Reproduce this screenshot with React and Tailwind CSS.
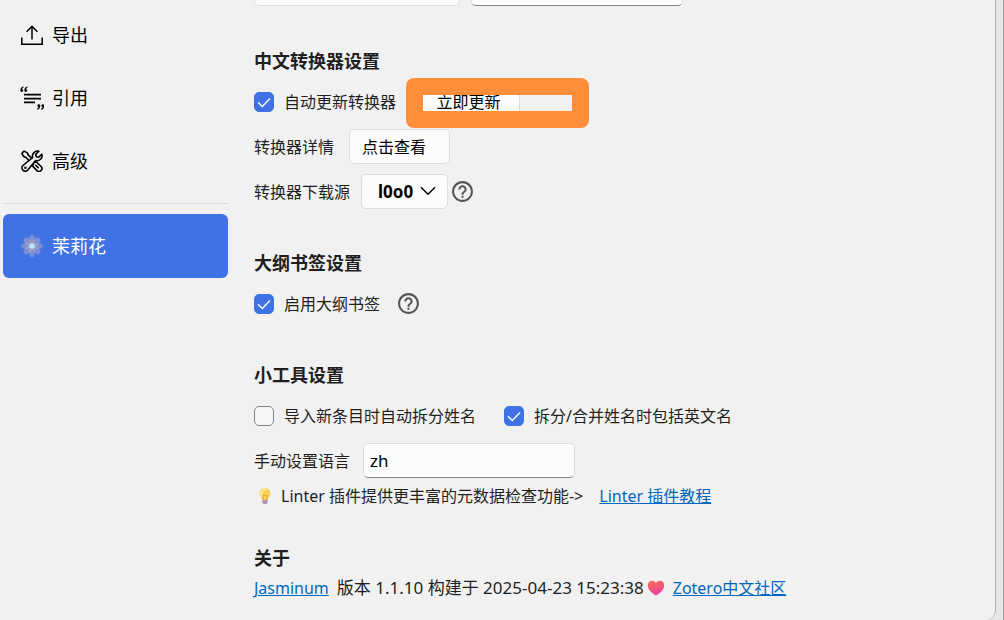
import { useState } from "react";
import { MdHelpOutline } from "react-icons/md";

// sidebar icons
const ExportIcon = () => (
	<svg viewBox="0 0 22 22" className="w-[22px] h-[22px]" fill="none" stroke="currentColor" strokeWidth="1.5">
		<path d="M0.8 13.5v6.7h20.4v-6.7" />
		<path d="M11 15.5V2.5M5.6 7.8L11 2.4l5.4 5.4" />
	</svg>
);

const CiteIcon = () => (
	<svg viewBox="0 0 24 24" className="w-6 h-6 -mx-px" fill="none" stroke="currentColor" strokeWidth="1.6">
		<path d="M4 8.6h17M4 12.6h17M4 16.400h11" />
		<g fill="currentColor" stroke="none">
			<path d="M3.4 0.4C1.4 1 0.3 2.4 0.3 4.300c0 1.100.6 1.700 1.500 1.700s1.500-.6 1.500-1.400c0-.8-.5-1.300-1.300-1.400.2-.8.7-1.4 1.600-1.800z" />
			<path d="M7.4 0.4C5.4 1 4.3 2.4 4.3 4.300c0 1.100.6 1.700 1.500 1.700s1.500-.6 1.500-1.400c0-.8-.5-1.300-1.300-1.400.2-.8.7-1.4 1.600-1.800z" />
			<path d="M17.2 23.800c2-.6 3.100-2 3.100-3.900 0-1.100-.6-1.700-1.500-1.700s-1.500.6-1.500 1.400c0 .8.5 1.300 1.300 1.400-.2.800-.7 1.400-1.600 1.800z" />
			<path d="M21.2 23.800c2-.6 3.100-2 3.100-3.900 0-1.100-.6-1.700-1.500-1.700s-1.500.6-1.500 1.400c0 .8.5 1.300 1.300 1.400-.2.800-.7 1.400-1.600 1.800z" />
		</g>
	</svg>
);

const ToolsIcon = () => (
	<svg
		viewBox="0 0 22 22"
		className="w-[22px] h-[22px]"
		fill="none"
		stroke="currentColor"
		strokeWidth="1.6"
		strokeLinejoin="round"
		strokeLinecap="round"
	>
		{/* wrench */}
		<path d="M17.9 1.2a5.200 5.200 0 0 0-6.300 6.400L1.900 15.500a3.300 3.300 0 1 0 4.700 4.700l8-9.600a5.200 5.200 0 0 0 6.300-6.400l-3.200 3-2.500-.5-.5-2.300z" />
		<circle cx="4.4" cy="17.7" r="0.5" />
		{/* screwdriver */}
		<path d="M7.7 10.2L5 7.5 2.3 6.2 0.9 3.3 3.1 1.1 6.1 2.6 7.4 5.2 10 7.7" />
		<path d="M13.6 12.5l1.300-1 5.200 5a2.900 2.900 0 0 1-4.100 4.100l-4.600-4.700 1-1.300" />
		<path d="M14.8 15.2l2.500 2.500" />
	</svg>
);

const PETALS = [0, 45, 90, 135, 180, 225, 270, 315];

const JasmineIcon = () => (
	<svg viewBox="0 0 22 22" className="w-[22px] h-[22px]">
		{PETALS.map((angle) => (
			<ellipse
				key={angle}
				cx="11"
				cy="5"
				rx="3"
				ry="4.9"
				fill="#b3aec4"
				fillOpacity="0.5"
				transform={`rotate(${angle} 11 11)`}
			/>
		))}
		<circle cx="11" cy="11" r="5" fill="none" stroke="#c49aa8" strokeWidth="1.2" strokeDasharray="1 1.5" />
		<circle cx="11" cy="11" r="2.8" fill="#b5e8fb" />
	</svg>
);

const BulbIcon = () => (
	<svg viewBox="0 0 16 18" className="w-4 h-[18px]">
		<path d="M8 1a5.500 5.500 0 0 0-5.500 5.500c0 2.700 2.200 3.800 2.700 6.500h5.600c.5-2.700 2.700-3.800 2.700-6.500A5.500 5.500 0 0 0 8 1z" fill="#fbcf58" />
		<path d="M8 1a5.500 5.500 0 0 0-5.500 5.500c0 2 1.300 3.200 2.100 4.700C5 7 7 3.500 11 2a5.500 5.500 0 0 0-3-1z" fill="#fde48c" />
		<path d="M6.5 13L6 8.500h4L9.500 13" fill="none" stroke="#ef9a3c" strokeWidth="0.8" />
		<path d="M5.2 13h5.600v2.500L9.500 17h-3l-1.300-1.500z" fill="#a79bb9" />
	</svg>
);

const HeartIcon = () => (
	<svg viewBox="0 0 18 16" className="w-[18px] h-4">
		<defs>
			<linearGradient id="heart" x1="0" y1="0" x2="0.3" y2="1">
				<stop offset="0" stopColor="#f8705f" />
				<stop offset="0.5" stopColor="#f4586f" />
				<stop offset="1" stopColor="#ee3fae" />
			</linearGradient>
		</defs>
		<path
			d="M9 15.500C5 13 0.8 9.800 0.8 5.400 0.8 2.500 2.700 0.800 5 0.800c1.700 0 3.200.8 4 2.300.8-1.500 2.300-2.300 4-2.300 2.300 0 4.200 1.700 4.200 4.600 0 4.400-4.200 7.600-8.200 10.100z"
			fill="url(#heart)"
		/>
	</svg>
);

const navItems = [
	{ name: "导出", icon: <ExportIcon /> },
	{ name: "引用", icon: <CiteIcon /> },
	{ name: "高级", icon: <ToolsIcon /> },
];

const Checkbox = ({ id, label, defaultChecked }) => (
	<div className="flex items-center gap-[10px]">
		<span className="relative flex">
			<input
				type="checkbox"
				id={id}
				defaultChecked={defaultChecked}
				className="peer appearance-none w-5 h-5 rounded-[5px] border border-[#868686] bg-[#f5f5f5] checked:border-[#4072e5] checked:bg-[#4072e5]"
			/>
			<svg
				viewBox="0 0 20 20"
				className="absolute inset-0 w-5 h-5 pointer-events-none opacity-0 peer-checked:opacity-100"
				fill="none"
				stroke="white"
				strokeWidth="1.3"
			>
				<path d="M4 10.3l4.300 4.200L16 6.500" />
			</svg>
		</span>
		<label htmlFor={id}>{label}</label>
	</div>
);

const Help = () => (
	<button type="button" aria-label="帮助" className="text-[#555555]">
		<MdHelpOutline className="w-[25px] h-[25px]" />
	</button>
);

const Section = ({ title, children }) => (
	<section>
		<h2 className="mb-[11px] text-lg leading-6 font-bold">{title}</h2>
		{children}
	</section>
);

const App = () => {
	const [source, setSource] = useState("l0o0");
	const [language, setLanguage] = useState("zh");

	return (
		<div className="flex h-screen overflow-hidden bg-[#e6e6e6] border-r border-[#a3a3a3] pr-[7px] text-base leading-6 text-[#1f1f1f] font-['Noto_Sans','Noto_Sans_CJK_SC',sans-serif]">
			<div className="flex flex-1 overflow-hidden bg-[#f1f1f1] border-r border-[#b0b0b0] rounded-br-[10px]">
				{/* SIDEBAR */}
				<nav className="w-[228px] shrink-0 pl-[3px] pt-[3px] text-lg text-black">
					{navItems.map((item) => (
						<button key={item.name} type="button" className="flex w-full h-[63px] items-center gap-[9px] px-[18px]">
							{item.icon}
							{item.name}
						</button>
					))}
					<hr className="mt-[11px] mb-[10px] border-[#d8d8d8]" />
					<button type="button" className="flex w-full h-16 items-center gap-[9px] px-[18px] rounded-md bg-[#4072e5] text-white">
						<JasmineIcon />
						茉莉花
					</button>
				</nav>

				{/* SETTINGS */}
				<main className="flex-1 pl-[26px]">
					<div className="flex gap-[11px] -mt-[29px] mb-[43px]">
						<input aria-label="下载目录" className="w-[206px] h-[35px] rounded-[5px] border border-[#dcdcdc] bg-[#fcfcfc]" />
						<input aria-label="文件名" className="w-[212px] h-[35px] rounded-[5px] border border-[#dcdcdc] border-b-[#868686] bg-[#fcfcfc]" />
					</div>

					<div className="flex flex-col gap-[42px]">
						<Section title="中文转换器设置">
							<div className="flex flex-col gap-[10px]">
								<div className="flex items-center gap-[21px] h-[35px]">
									<Checkbox id="autoUpdate" label="自动更新转换器" defaultChecked />
									<div className="relative">
										<button type="button" className="w-[103px] h-[35px] rounded-[5px] border border-[#dcdcdc] bg-[#fcfcfc] text-black">
											立即更新
										</button>
										{/* highlight frame */}
										<div className="absolute -left-[11px] -top-[6px] w-[183px] h-[50px] rounded-lg border-[17px] border-[#ff8e3a] pointer-events-none" />
									</div>
								</div>
								<div className="flex items-center gap-[15px]">
									<span>转换器详情</span>
									<button type="button" className="w-[101px] h-[35px] pl-3 text-left rounded-[5px] border border-[#dcdcdc] bg-[#fcfcfc] text-black">
										点击查看
									</button>
								</div>
								<div className="flex items-center gap-[11px]">
									<label htmlFor="source">转换器下载源</label>
									<div className="flex items-center gap-[2px]">
										<div className="relative">
											<select
												id="source"
												value={source}
												onChange={(event) => setSource(event.target.value)}
												className="block appearance-none w-[87px] h-[35px] pl-4 rounded-[5px] border border-[#dcdcdc] bg-[#fcfcfc] text-[17px] text-black font-bold"
											>
												<option value="l0o0">l0o0</option>
											</select>
											<svg
												viewBox="0 0 16 10"
												className="absolute right-3 top-3 w-4 h-[10px] pointer-events-none"
												fill="none"
												stroke="black"
												strokeWidth="1.5"
											>
												<path d="M1 1.3l7 7 7-7" />
											</svg>
										</div>
										<Help />
									</div>
								</div>
							</div>
						</Section>

						<Section title="大纲书签设置">
							<div className="flex items-center gap-4 h-[35px]">
								<Checkbox id="outline" label="启用大纲书签" defaultChecked />
								<Help />
							</div>
						</Section>

						<Section title="小工具设置">
							<div className="flex items-center gap-7 h-[35px] mb-[10px]">
								<Checkbox id="splitName" label="导入新条目时自动拆分姓名" />
								<Checkbox id="englishName" label="拆分/合并姓名时包括英文名" defaultChecked />
							</div>
							<div className="flex items-center gap-[13px]">
								<label htmlFor="language">手动设置语言</label>
								<input
									id="language"
									type="text"
									value={language}
									onChange={(event) => setLanguage(event.target.value)}
									className="w-[212px] h-[35px] px-[6px] rounded-[5px] border border-[#dcdcdc] border-b-[#868686] bg-[#fcfcfc] text-[17px] text-black"
								/>
							</div>
							<div className="flex items-center h-[35px] pl-[3px]">
								<BulbIcon />
								<p className="ml-2 mr-4">Linter 插件提供更丰富的元数据检查功能-&gt;</p>
								<a href="#linter" className="text-[#0067c0] underline">Linter 插件教程</a>
							</div>
						</Section>
					</div>

					{/* ABOUT */}
					<section className="mt-[33px]">
						<h2 className="mb-[6px] text-lg leading-6 font-bold">关于</h2>
						<div className="flex items-center">
							<a href="#jasminum" className="text-[#0067c0] underline">Jasminum</a>
							<p className="ml-2 mr-[3px] text-[17px]">版本 1.1.10 构建于 2025-04-23 15:23:38</p>
							<HeartIcon />
							<a href="#zotero" className="ml-2 text-[#0067c0] underline">Zotero中文社区</a>
						</div>
					</section>
				</main>
			</div>
		</div>
	);
};

export default App;
